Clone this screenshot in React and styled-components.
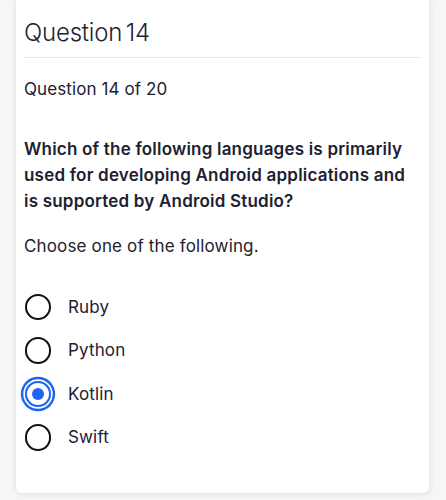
import React, { useState } from 'react';
import styled, { createGlobalStyle } from 'styled-components';

// CSS
const GlobalStyle = createGlobalStyle`
  html, body {
    margin: 0;
    padding: 0;
    background-color: #f6f6f6;
    font-family: Inter, 'Noto Sans', sans-serif;
    color: #1d2130;
  }
`;

const Page = styled.div`
  padding: 0 17px 7px 16px;
`;

const Card = styled.div`
  background-color: #fff;
  border-radius: 0 0 6px 6px;
  box-shadow: 0px 1px 6px 1px rgba(0, 0, 0, 0.08);
  padding: 0 8px 34px 8px;
`;

const Title = styled.h1`
  margin: 0;
  padding: 17px 0 8px;
  font-size: 24px;
  line-height: 32px;
  font-weight: 300;
  letter-spacing: -0.2px;
  word-spacing: -3px;
  border-bottom: 1px solid #e9e9ec;
`;

const Counter = styled.div`
  margin-top: 19px;
  font-size: 17px;
  line-height: 24px;
  letter-spacing: 0.1px;
`;

const Prompt = styled.p`
  margin: 35px 0 0;
  font-size: 17px;
  line-height: 26px;
  font-weight: 600;
  letter-spacing: 0.2px;
`;

const Hint = styled.p`
  margin: 19px 0 0;
  font-size: 17px;
  line-height: 26px;
  letter-spacing: 0.15px;
`;

const Options = styled.div`
  margin-top: 26px;
  display: flex;
  flex-direction: column;
`;

const Option = styled.label`
  display: flex;
  align-items: center;
  gap: 17px;
  height: 43.5px;
  font-size: 17px;
  line-height: 26px;
  letter-spacing: 0.15px;
  cursor: pointer;
`;

const Radio = styled.span`
  box-sizing: border-box;
  width: 26.5px;
  height: 26.5px;
  margin-left: 0.5px;
  border-radius: 50%;
  border: 2.5px solid ${(props) => (props.checked ? '#1e64f0' : '#111')};
  display: flex;
  align-items: center;
  justify-content: center;
  box-shadow: ${(props) =>
    props.checked ? '0 0 0 1.7px #fff, 0 0 0 4.2px #1e64f0' : 'none'};

  &::after {
    content: '';
    width: 12px;
    height: 12px;
    border-radius: 50%;
    background-color: #1e64f0;
    display: ${(props) => (props.checked ? 'block' : 'none')};
  }
`;

const choices = ['Ruby', 'Python', 'Kotlin', 'Swift'];

function App() {
  const [selected, setSelected] = useState('Kotlin');

  return (
    <Page>
      <GlobalStyle />
      <Card>
        <Title>Question 14</Title>
        <Counter>Question 14 of 20</Counter>
        <Prompt>
          Which of the following languages is primarily used for developing
          Android applications and is supported by Android Studio?
        </Prompt>
        <Hint>Choose one of the following.</Hint>
        <Options>
          {choices.map((choice) => (
            <Option key={choice} onClick={() => setSelected(choice)}>
              <Radio checked={selected === choice} />
              {choice}
            </Option>
          ))}
        </Options>
      </Card>
    </Page>
  );
}

export default App;
